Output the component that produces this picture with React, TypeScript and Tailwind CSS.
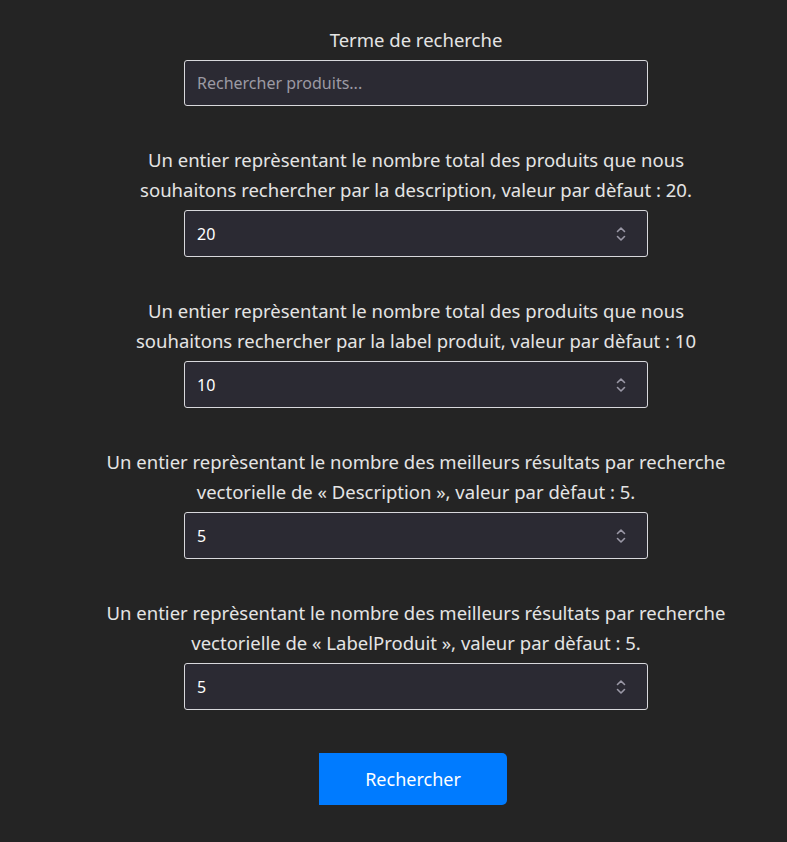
import React from "react";

const Spinner = () => (
  <svg width="12" height="18" viewBox="0 0 12 18" className="absolute right-[20px] top-1/2 -translate-y-1/2" fill="none" stroke="#9a98a6" strokeWidth="1.6" strokeLinecap="round" strokeLinejoin="round">
    <path d="M2.5 6.5 L6 3 L9.5 6.5" />
    <path d="M2.5 11.5 L6 15 L9.5 11.5" />
  </svg>
);

const Field = ({ label, value }: { label: React.ReactNode; value: string }) => (
  <div className="flex flex-col items-center">
    <div className="text-center text-[18.5px] leading-[30px] text-[#e4e4e4]">{label}</div>
    <div className="relative mt-[5px] h-[47px] w-[464px] rounded-[3px] border border-[#d8d8dc] bg-[#2b2a33]">
      <div className="flex h-full items-center pl-[12px] text-[16px] text-white">{value}</div>
      <Spinner />
    </div>
  </div>
);

export default function App() {
  return (
    <div className="min-h-[842px] bg-[#242424] pl-[45px]" style={{ fontFamily: '"Noto Sans", "Open Sans", sans-serif' }}>
      <div className="flex flex-col items-center pt-[25px]">
        <div className="flex flex-col items-center">
          <div className="text-center text-[18.5px] leading-[30px] text-[#e4e4e4]">Terme de recherche</div>
          <div className="mt-[5px] flex h-[46px] w-[464px] items-center rounded-[3px] border border-[#d8d8dc] bg-[#2b2a33] pl-[12px] text-[16px] text-[#9c9aa4]">
            Rechercher produits...
          </div>
        </div>
        <div className="mt-[39px] flex flex-col gap-[39px]">
          <Field
            value="20"
            label={<>Un entier reprèsentant le nombre total des produits que nous<br />souhaitons rechercher par la description, valeur par dèfaut : 20.</>}
          />
          <Field
            value="10"
            label={<>Un entier reprèsentant le nombre total des produits que nous<br />souhaitons rechercher par la label produit, valeur par dèfaut : 10</>}
          />
          <Field
            value="5"
            label={<>Un entier reprèsentant le nombre des meilleurs résultats par recherche<br />vectorielle de « Description », valeur par dèfaut : 5.</>}
          />
          <Field
            value="5"
            label={<>Un entier reprèsentant le nombre des meilleurs résultats par recherche<br />vectorielle de « LabelProduit », valeur par dèfaut : 5.</>}
          />
        </div>
        <button className="mr-[6px] mt-[43px] h-[52px] w-[188px] rounded-r-[5px] bg-[#007bff] text-[18px] text-white">
          Rechercher
        </button>
      </div>
    </div>
  );
}
